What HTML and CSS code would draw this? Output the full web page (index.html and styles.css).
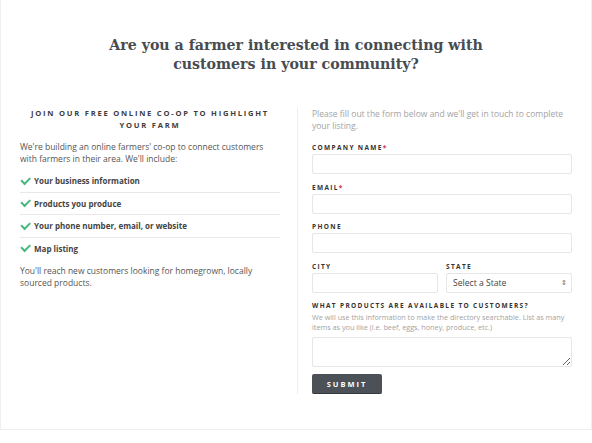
FILE: index.html
```html
<!DOCTYPE html>
<html lang="en">
<head>
    <meta charset="UTF-8">
    <meta name="viewport" content="width=device-width, initial-scale=1.0">
    <title>Farmers Co-op</title>
    <link rel="stylesheet" href="styles.css">
</head>
<body>
    <div class="page">
        <h1>Are you a farmer interested in connecting with customers in your community?</h1>

        <div class="columns">
            <div class="intro">
                <h2>Join our free online co-op to highlight your farm</h2>
                <p>We're building an online farmers' co-op to connect customers with farmers in their area. We'll include:</p>
                <ul class="checklist">
                    <li><span class="check"></span>Your business information</li>
                    <li><span class="check"></span>Products you produce</li>
                    <li><span class="check"></span>Your phone number, email, or website</li>
                    <li><span class="check"></span>Map listing</li>
                </ul>
                <p class="outro">You'll reach new customers looking for homegrown, locally sourced products.</p>
            </div>

            <form class="signup" id="farmForm">
                <p class="form-intro">Please fill out the form below and we'll get in touch to complete your listing.</p>

                <div class="field">
                    <label for="company">Company Name<span class="req">*</span></label>
                    <input type="text" id="company">
                </div>
                <div class="field">
                    <label for="email">Email<span class="req">*</span></label>
                    <input type="email" id="email">
                </div>
                <div class="field">
                    <label for="phone">Phone</label>
                    <input type="text" id="phone">
                </div>
                <div class="field-row">
                    <div class="field">
                        <label for="city">City</label>
                        <input type="text" id="city">
                    </div>
                    <div class="field">
                        <label for="state">State</label>
                        <div class="select-wrap">
                            <select id="state">
                                <option>Select a State</option>
                            </select>
                            <span class="arrows">&#8661;</span>
                        </div>
                    </div>
                </div>
                <div class="field">
                    <label for="products">What products are available to customers?</label>
                    <p class="help">We will use this information to make the directory searchable. List as many items as you like (i.e. beef, eggs, honey, produce, etc.)</p>
                    <textarea id="products"></textarea>
                </div>
                <button type="submit">Submit</button>
            </form>
        </div>
    </div>
</body>
</html>
```

FILE: styles.css
```css
body {
    margin: 0;
    font-family: "Open Sans", Arial, sans-serif;
    color: #555;
    background: #fff;
}
.page {
    border: 1px solid #efefef;
    border-top: none;
    padding: 36px 0 35px;
}
h1 {
    font-family: "DejaVu Serif", Georgia, serif;
    font-weight: bold;
    font-size: 14.2px;
    line-height: 19px;
    color: #474c51;
    text-align: center;
    max-width: 420px;
    margin: 0 auto;
}
.columns {
    display: flex;
    margin-top: 34px;
    padding: 0 19px 0 19px;
}
.intro {
    width: 260px;
    padding-right: 17px;
}
.intro h2 {
    margin: 0;
    font-size: 7.6px;
    line-height: 11.5px;
    letter-spacing: 1.75px;
    text-transform: uppercase;
    text-align: center;
    color: #3d3d3d;
}
.intro p {
    margin: 10px 0 0;
    font-size: 8.5px;
    line-height: 12px;
    color: #555;
}
.checklist {
    list-style: none;
    margin: 5px 0 0;
    padding: 0;
}
.checklist li {
    display: flex;
    align-items: center;
    padding: 5px 0;
    line-height: 11.5px;
    font-size: 8px;
    font-weight: bold;
    color: #444;
    border-bottom: 1px solid #e8e8e8;
}
.checklist li:last-child {
    border-bottom: none;
}
.check {
    width: 7px;
    height: 3.5px;
    border-left: 2px solid #45b97c;
    border-bottom: 2px solid #45b97c;
    transform: rotate(-45deg);
    margin: -3px 4px 0 1px;
}
.intro p.outro {
    margin-top: 6px;
}
.signup {
    flex: 1;
    border-left: 1px solid #eee;
    padding-left: 14px;
}
.form-intro {
    margin: 0;
    font-size: 8.5px;
    line-height: 12px;
    color: #a3a3a3;
}
.field {
    margin-top: 8.5px;
}
.form-intro + .field {
    margin-top: 11px;
}
label {
    display: block;
    font-size: 6.5px;
    line-height: 10px;
    font-weight: bold;
    letter-spacing: 1.35px;
    text-transform: uppercase;
    color: #333;
    margin-bottom: 1px;
}
.req {
    color: #c8323c;
}
input, select, textarea {
    display: block;
    box-sizing: border-box;
    width: 100%;
    height: 20px;
    margin: 0;
    border: 1px solid #e6e6e6;
    border-radius: 2px;
    background: #fff;
    font-family: inherit;
}
.field-row {
    display: flex;
    gap: 8px;
}
.field-row .field {
    flex: 1;
}
.select-wrap {
    position: relative;
}
select {
    appearance: none;
    -webkit-appearance: none;
    padding: 0 6px;
    font-size: 8.6px;
    color: #444;
}
.arrows {
    position: absolute;
    right: 5px;
    top: 5px;
    font-size: 7px;
    line-height: 10px;
    color: #666;
}
.help {
    margin: 0;
    font-size: 7.25px;
    line-height: 10px;
    color: #a3a3a3;
}
textarea {
    height: 30px;
    margin-top: 5px;
    resize: vertical;
}
button {
    display: block;
    margin-top: 7px;
    width: 70px;
    height: 20px;
    border: none;
    border-bottom: 1px solid #34393d;
    border-radius: 2px;
    background-color: #4b5156;
    color: #fff;
    font-family: inherit;
    font-size: 7.5px;
    font-weight: bold;
    letter-spacing: 2px;
    text-transform: uppercase;
    cursor: pointer;
}
```
